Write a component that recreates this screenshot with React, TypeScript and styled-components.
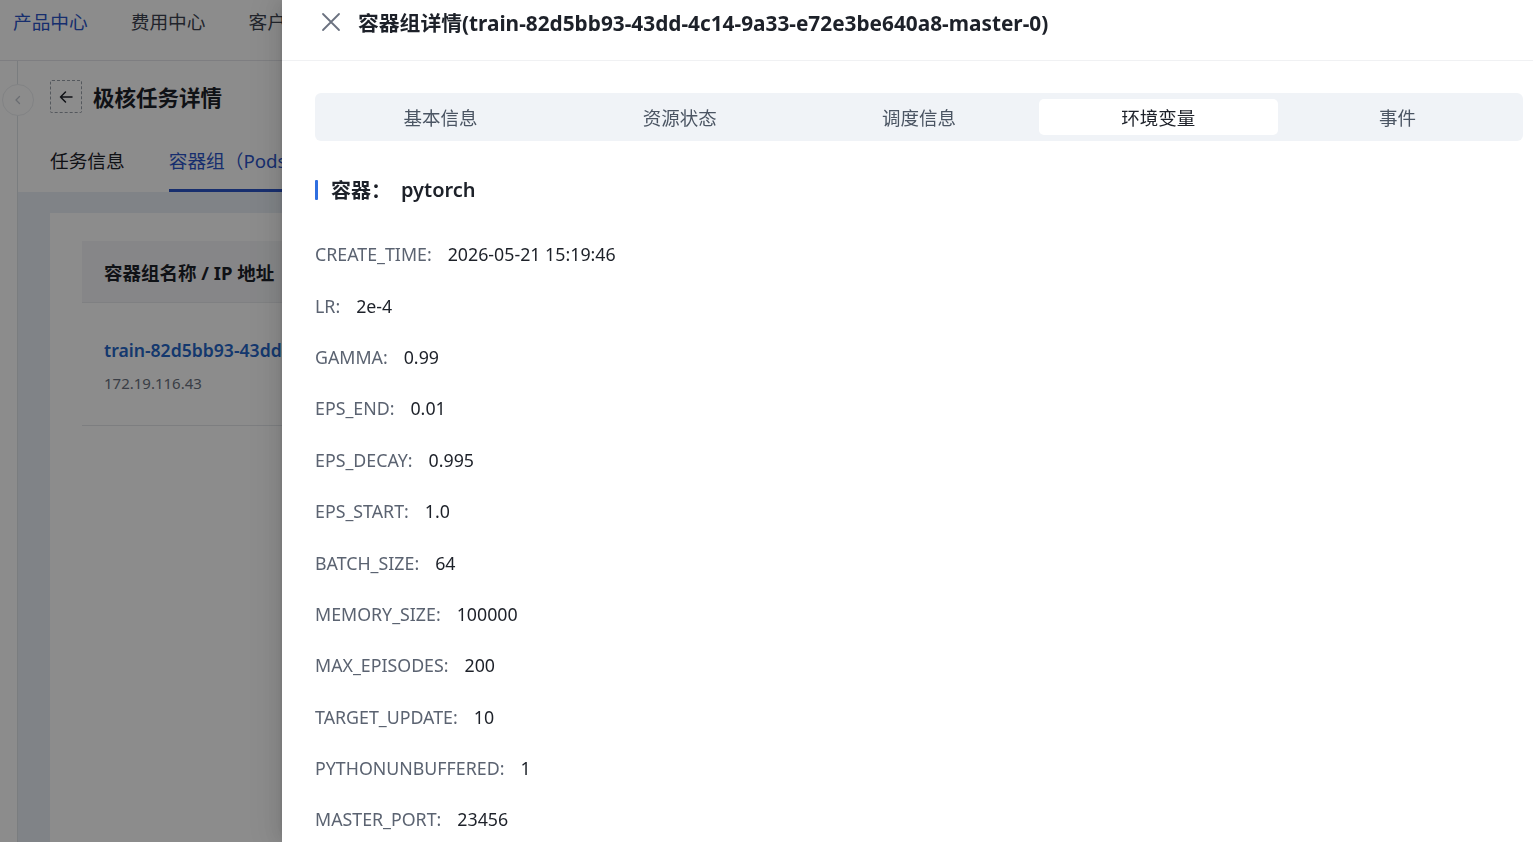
import React from "react";
import styled, { createGlobalStyle } from "styled-components";

const Global = createGlobalStyle`
  html, body { margin: 0; padding: 0; height: 100%; overflow: hidden; }
  body {
    font-family: "Noto Sans", "Noto Sans CJK SC", sans-serif;
    background: #ffffff;
    color: #1d2129;
  }
  * { box-sizing: border-box; }
`;

/* ---------- underlying page (only the strip left of the drawer is visible) ---------- */

const Page = styled.div`
  width: 282px;
  height: 842px;
  overflow: hidden;
  display: flex;
  flex-direction: column;
  background: #ffffff;
`;

const TopNav = styled.nav`
  height: 61px;
  flex: none;
  display: flex;
  align-items: flex-start;
  gap: 43px;
  padding: 7px 0 0 13px;
  overflow: hidden;
  border-bottom: 1px solid #e5e6eb;
`;

const NavItem = styled.span<{ $active?: boolean }>`
  font-size: 18.7px;
  white-space: nowrap;
  color: ${(p) => (p.$active ? "#2b55c9" : "#3d4350")};
`;

const Body = styled.div`
  flex: 1;
  display: flex;
  min-height: 0;
`;

const Sider = styled.aside`
  position: relative;
  width: 18px;
  flex: none;
  border-right: 1px solid #dfe3e8;
`;

const CollapseBtn = styled.div`
  position: absolute;
  left: 2px;
  top: 23px;
  width: 32px;
  height: 32px;
  border-radius: 50%;
  background: #ffffff;
  border: 1px solid #eceef1;
  display: flex;
  align-items: center;
  justify-content: center;
  color: #c2c7cf;
`;

const Main = styled.main`
  flex: 1;
  display: flex;
  flex-direction: column;
  min-width: 0;
`;

const PageHeader = styled.div`
  display: flex;
  align-items: center;
  gap: 11px;
  padding: 0 0 3px 32px;
  height: 74px;
  flex: none;
`;

const BackBtn = styled.div`
  width: 32px;
  height: 33px;
  flex: none;
  border: 1px dashed #9aa0aa;
  border-radius: 2px;
  display: flex;
  align-items: center;
  justify-content: center;
  color: #1d2129;
`;

const PageTitle = styled.h1`
  margin: 0;
  font-size: 21.5px;
  font-weight: 700;
  white-space: nowrap;
  color: #1d2129;
`;

const PageTabs = styled.div`
  display: flex;
  gap: 44px;
  padding-left: 32px;
  height: 57px;
  flex: none;
  align-items: stretch;
  overflow: hidden;
`;

const PageTab = styled.div<{ $active?: boolean }>`
  display: flex;
  align-items: center;
  padding-bottom: 5px;
  font-size: 18.7px;
  white-space: nowrap;
  color: ${(p) => (p.$active ? "#2b55c9" : "#1d2129")};
  border-bottom: 3px solid ${(p) => (p.$active ? "#2b55c9" : "transparent")};
`;

const ContentArea = styled.div`
  flex: 1;
  background: #e9eff6;
  padding: 21px 0 0 32px;
  display: flex;
  min-width: 0;
`;

const Card = styled.div`
  flex: 1;
  min-width: 0;
  background: #ffffff;
  padding: 28px 0 28px 32px;
`;

const TableHead = styled.div`
  height: 62px;
  display: flex;
  align-items: center;
  padding-left: 22px;
  background: #f4f5f7;
  border-bottom: 1px solid #e8eaed;
  font-size: 18.5px;
  font-weight: 700;
  color: #1d2129;
  white-space: nowrap;
  overflow: hidden;
`;

const TableRow = styled.div`
  height: 123px;
  padding: 35px 0 0 22px;
  border-bottom: 1px solid #e3e6ea;
  display: flex;
  flex-direction: column;
  gap: 11px;
  white-space: nowrap;
  overflow: hidden;
`;

const PodLink = styled.span`
  display: block;
  overflow: hidden;
  font-size: 17.6px;
  font-weight: 600;
  color: #2566c8;
`;

const PodIp = styled.span`
  display: block;
  font-size: 15px;
  color: #6b7280;
`;

/* ---------- overlay + drawer ---------- */

const Mask = styled.div`
  position: fixed;
  inset: 0;
  background: rgba(0, 0, 0, 0.45);
`;

const Drawer = styled.section`
  position: fixed;
  top: 0;
  right: 0;
  bottom: 0;
  width: 1251px;
  background: #ffffff;
  display: flex;
  flex-direction: column;
  box-shadow: -6px 0 16px 0 rgba(0, 0, 0, 0.08),
    -3px 0 6px -4px rgba(0, 0, 0, 0.12), -9px 0 28px 8px rgba(0, 0, 0, 0.05);
`;

const DrawerHeader = styled.header`
  height: 61px;
  flex: none;
  display: flex;
  align-items: center;
  gap: 17px;
  padding: 0 0 16px 39px;
  border-bottom: 1px solid #f0f1f3;
`;

const CloseBtn = styled.span`
  display: flex;
  color: #6b7280;
`;

const DrawerTitle = styled.h2`
  margin: 0;
  font-size: 20.8px;
  font-weight: 700;
  color: #1d2129;
  white-space: nowrap;
`;

const DrawerBody = styled.div`
  flex: 1;
  padding: 32px 10px 0 33px;
  overflow: hidden;
`;

const SegTabs = styled.div`
  height: 48px;
  background: #f0f3f7;
  border-radius: 6px;
  padding: 6px;
  display: grid;
  grid-template-columns: repeat(5, 1fr);
`;

const SegTab = styled.div<{ $active?: boolean }>`
  display: flex;
  align-items: center;
  justify-content: center;
  font-size: 18.5px;
  border-radius: 5px;
  color: ${(p) => (p.$active ? "#1d2129" : "#4b5563")};
  background: ${(p) => (p.$active ? "#ffffff" : "transparent")};
`;

const SectionTitle = styled.h3`
  margin: 34px 0 0;
  display: flex;
  align-items: center;
  font-size: 20px;
  font-weight: 600;
  color: #1d2129;
  &::before {
    content: "";
    width: 3px;
    height: 20px;
    background: #2f6fe0;
    border-radius: 1px;
    margin-right: 13px;
  }
`;

const ContainerName = styled.span`
  margin-left: 10px;
`;

const VarList = styled.dl`
  margin: 35px 0 0;
  display: flex;
  flex-direction: column;
  gap: 21px;
`;

const VarRow = styled.div`
  display: flex;
  align-items: center;
  height: 30.4px;
  font-size: 17.8px;
  white-space: nowrap;
`;

const VarKey = styled.dt`
  color: #5b6371;
  margin-right: 16px;
`;

const VarValue = styled.dd`
  margin: 0;
  color: #1d2129;
`;

const envVars: [string, string][] = [
  ["CREATE_TIME", "2026-05-21 15:19:46"],
  ["LR", "2e-4"],
  ["GAMMA", "0.99"],
  ["EPS_END", "0.01"],
  ["EPS_DECAY", "0.995"],
  ["EPS_START", "1.0"],
  ["BATCH_SIZE", "64"],
  ["MEMORY_SIZE", "100000"],
  ["MAX_EPISODES", "200"],
  ["TARGET_UPDATE", "10"],
  ["PYTHONUNBUFFERED", "1"],
  ["MASTER_PORT", "23456"],
];

const tabs = ["基本信息", "资源状态", "调度信息", "环境变量", "事件"];

export default function App() {
  return (
    <>
      <Global />
      <Page>
        <TopNav>
          <NavItem $active>产品中心</NavItem>
          <NavItem>费用中心</NavItem>
          <NavItem>客户中心</NavItem>
        </TopNav>
        <Body>
          <Sider>
            <CollapseBtn>
              <svg width="12" height="12" viewBox="0 0 12 12" fill="none">
                <path d="M7.5 2.5 4 6l3.5 3.5" stroke="currentColor" strokeWidth="1.3" strokeLinecap="round" strokeLinejoin="round" />
              </svg>
            </CollapseBtn>
          </Sider>
          <Main>
            <PageHeader>
              <BackBtn>
                <svg width="16" height="16" viewBox="0 0 16 16" fill="none">
                  <path d="M14 8H2.5M7.5 3 2.5 8l5 5" stroke="currentColor" strokeWidth="1.5" strokeLinecap="round" strokeLinejoin="round" />
                </svg>
              </BackBtn>
              <PageTitle>极核任务详情</PageTitle>
            </PageHeader>
            <PageTabs>
              <PageTab>任务信息</PageTab>
              <PageTab $active>容器组（Pods）</PageTab>
            </PageTabs>
            <ContentArea>
              <Card>
                <TableHead>容器组名称 / IP 地址</TableHead>
                <TableRow>
                  <PodLink>train-82d5bb93-43dd-4c14-9a33-e72e3be640a8-master-0</PodLink>
                  <PodIp>172.19.116.43</PodIp>
                </TableRow>
              </Card>
            </ContentArea>
          </Main>
        </Body>
      </Page>

      <Mask />
      <Drawer>
        <DrawerHeader>
          <CloseBtn>
            <svg width="20" height="20" viewBox="0 0 20 20" fill="none">
              <path d="M2 2l16 16M18 2 2 18" stroke="currentColor" strokeWidth="1.8" strokeLinecap="round" />
            </svg>
          </CloseBtn>
          <DrawerTitle>容器组详情(train-82d5bb93-43dd-4c14-9a33-e72e3be640a8-master-0)</DrawerTitle>
        </DrawerHeader>
        <DrawerBody>
          <SegTabs>
            {tabs.map((t) => (
              <SegTab key={t} $active={t === "环境变量"}>
                {t}
              </SegTab>
            ))}
          </SegTabs>
          <SectionTitle>
            容器：<ContainerName>pytorch</ContainerName>
          </SectionTitle>
          <VarList>
            {envVars.map(([k, v]) => (
              <VarRow key={k}>
                <VarKey>{k}:</VarKey>
                <VarValue>{v}</VarValue>
              </VarRow>
            ))}
          </VarList>
        </DrawerBody>
      </Drawer>
    </>
  );
}
